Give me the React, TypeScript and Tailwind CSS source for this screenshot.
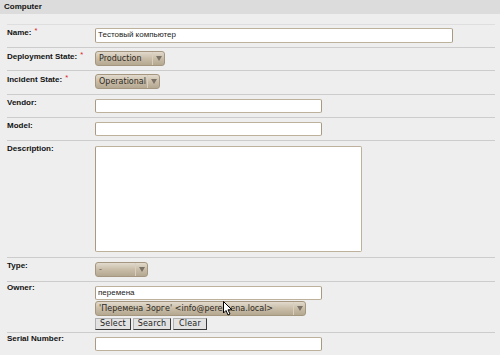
import type { ReactNode } from 'react'

function Req() {
  return <span className="relative -top-[2px] ml-[3px] text-[7.5px] font-normal text-[#d22]">*</span>
}

function Row({
  label,
  req,
  h,
  lpt,
  cpt,
  line = 'border-[#cccccc]',
  children,
}: {
  label: string
  req?: boolean
  h: string
  lpt: string
  cpt: string
  line?: string
  children?: ReactNode
}) {
  return (
    <div className={`flex border-t ${line} ${h}`}>
      <div className={`w-[88px] shrink-0 text-[8px] font-bold leading-[10px] text-[#111] ${lpt}`}>
        {label}
        {req && <Req />}
      </div>
      <div className={`flex flex-col items-start ${cpt}`}>{children}</div>
    </div>
  )
}

function Input({ w, h = 'h-[14px]', value }: { w: string; h?: string; value?: string }) {
  return (
    <div
      className={`${w} ${h} rounded-[2px] border border-[#bdb19c] border-l-[#a89a82] border-r-[#a89a82] bg-white px-[2px] text-[8px] leading-[12px] text-[#222]`}
    >
      {value}
    </div>
  )
}

function Arrow() {
  return (
    <svg width="6" height="5" viewBox="0 0 6 5">
      <polygon points="0,0 6,0 3,5" fill="#7a7266" />
    </svg>
  )
}

function Select({ w, value, dim }: { w: string; value: string; dim?: boolean }) {
  return (
    <div
      className={`flex ${w} h-[15px] rounded-[3px] border border-[#a5977f] bg-linear-to-b from-[#e2dacd] via-[#c9bda8] to-[#b5a891] font-['DejaVu_Sans',sans-serif]`}
    >
      <div
        className={`flex-1 overflow-hidden whitespace-nowrap pl-[3px] text-[8px] leading-[13px] ${dim ? 'text-[#6b6358]' : 'text-[#2e2a24]'}`}
      >
        {value}
      </div>
      <div className="flex w-[12px] shrink-0 items-center justify-center border-l border-[#d8cfbf]">
        <Arrow />
      </div>
    </div>
  )
}

function Btn({ w, children }: { w: string; children: ReactNode }) {
  return (
    <div
      className={`${w} h-[12px] border border-[#b0b0b0] border-r-[#3a3a3a] border-b-[#3a3a3a] bg-[#e2e2e2] text-center font-['DejaVu_Sans',sans-serif] text-[8px] leading-[10px] tracking-[0.2px] text-[#222]`}
    >
      {children}
    </div>
  )
}

function Cursor() {
  return (
    <svg className="absolute left-[223px] top-[301px]" width="10" height="15" viewBox="0 0 10 15">
      <path d="M0.5 0.5 L0.5 12 L3 9.5 L5 14 L7 13 L5 8.8 L8.8 8.8 Z" fill="#fff" stroke="#000" strokeWidth="1" />
    </svg>
  )
}

export default function App() {
  return (
    <div className="relative h-[355px] w-[500px] overflow-hidden bg-[#eeeeee] font-['Liberation_Sans',Arial,sans-serif]">
      <div className="h-[14px] bg-[#dcdcdc] px-[4px] text-[8px] font-bold leading-[13px] text-[#111]">Computer</div>
      <div className="mx-[7px] mt-[10px] w-[488px]">
        <Row label="Name:" req h="h-[23px]" lpt="pt-[3px]" cpt="pt-[3px]" line="border-[#dedede]">
          <Input w="w-[358px]" h="h-[15px]" value="Тестовый компьютер" />
        </Row>
        <Row label="Deployment State:" req h="h-[23px]" lpt="pt-[4px]" cpt="pt-[3px]">
          <Select w="w-[70px]" value="Production" />
        </Row>
        <Row label="Incident State:" req h="h-[24px]" lpt="pt-[4px]" cpt="pt-[3px]">
          <Select w="w-[65px]" value="Operational" />
        </Row>
        <Row label="Vendor:" h="h-[23px]" lpt="pt-[3px]" cpt="pt-[4px]">
          <Input w="w-[227px]" />
        </Row>
        <Row label="Model:" h="h-[23px]" lpt="pt-[3px]" cpt="pt-[4px]">
          <Input w="w-[227px]" />
        </Row>
        <Row label="Description:" h="h-[117px]" lpt="pt-[3px]" cpt="pt-[5px]">
          <div className="h-[106px] w-[267px] rounded-[2px] border border-[#bdb19c] border-l-[#a89a82] bg-white" />
        </Row>
        <Row label="Type:" h="h-[24px]" lpt="pt-[3px]" cpt="pt-[4px]">
          <Select w="w-[53px]" value="-" dim />
        </Row>
        <Row label="Owner:" h="h-[51px]" lpt="pt-[1px]" cpt="pt-[4px]">
          <Input w="w-[227px]" value="перемена" />
          <div className="mt-[1px]">
            <Select w="w-[211px]" value="'Перемена Зорге' <info@peremena.local>" />
          </div>
          <div className="mt-[2px] flex gap-[2px]">
            <Btn w="w-[36px]">Select</Btn>
            <Btn w="w-[38px]">Search</Btn>
            <Btn w="w-[34px]">Clear</Btn>
          </div>
        </Row>
        <Row label="Serial Number:" h="h-[24px]" lpt="pt-[1px]" cpt="pt-[4px]">
          <Input w="w-[227px]" />
        </Row>
      </div>
      <Cursor />
    </div>
  )
}
